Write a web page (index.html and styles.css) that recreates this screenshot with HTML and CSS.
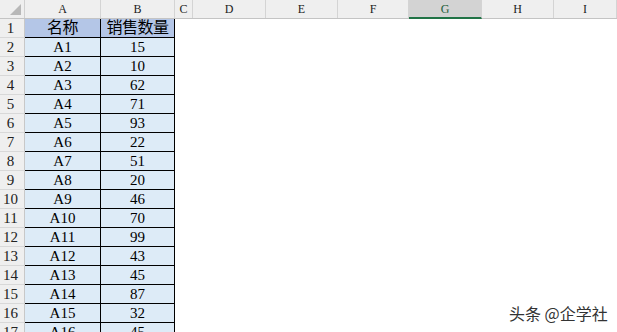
FILE: index.html
```html
<!DOCTYPE html>
<html lang="zh">

<head>
    <meta charset="UTF-8">
    <meta name="viewport" content="width=device-width, initial-scale=1.0">
    <title>销售数量</title>
    <link rel="stylesheet" href="styles.css">
</head>

<body>
    <div class="sheet">
        <div class="colhead">
            <div class="corner">
                <svg width="11" height="11" viewBox="0 0 11 11"><polygon points="11,0 11,11 0,11" fill="#b8b8b8"/></svg>
            </div>
            <div class="ch">A</div>
            <div class="ch">B</div>
            <div class="ch">C</div>
            <div class="ch">D</div>
            <div class="ch">E</div>
            <div class="ch">F</div>
            <div class="ch selected">G</div>
            <div class="ch">H</div>
            <div class="ch">I</div>
        </div>

        <div class="row">
            <div class="rn">1</div>
            <div class="cell title">名称</div>
            <div class="cell title">销售数量</div>
        </div>
        <div class="row"><div class="rn">2</div><div class="cell">A1</div><div class="cell">15</div></div>
        <div class="row"><div class="rn">3</div><div class="cell">A2</div><div class="cell">10</div></div>
        <div class="row"><div class="rn">4</div><div class="cell">A3</div><div class="cell">62</div></div>
        <div class="row"><div class="rn">5</div><div class="cell">A4</div><div class="cell">71</div></div>
        <div class="row"><div class="rn">6</div><div class="cell">A5</div><div class="cell">93</div></div>
        <div class="row"><div class="rn">7</div><div class="cell">A6</div><div class="cell">22</div></div>
        <div class="row"><div class="rn">8</div><div class="cell">A7</div><div class="cell">51</div></div>
        <div class="row"><div class="rn">9</div><div class="cell">A8</div><div class="cell">20</div></div>
        <div class="row"><div class="rn">10</div><div class="cell">A9</div><div class="cell">46</div></div>
        <div class="row"><div class="rn">11</div><div class="cell">A10</div><div class="cell">70</div></div>
        <div class="row"><div class="rn">12</div><div class="cell">A11</div><div class="cell">99</div></div>
        <div class="row"><div class="rn">13</div><div class="cell">A12</div><div class="cell">43</div></div>
        <div class="row"><div class="rn">14</div><div class="cell">A13</div><div class="cell">45</div></div>
        <div class="row"><div class="rn">15</div><div class="cell">A14</div><div class="cell">87</div></div>
        <div class="row"><div class="rn">16</div><div class="cell">A15</div><div class="cell">32</div></div>
        <div class="row"><div class="rn">17</div><div class="cell">A16</div><div class="cell">45</div></div>
    </div>

    <!-- 水印 -->
    <div class="watermark">头条 @企学社</div>
</body>

</html>
```

FILE: styles.css
```css
body {
    margin: 0;
    width: 617px;
    height: 332px;
    overflow: hidden;
    background: #fff;
    font-family: 'Liberation Serif', 'Noto Sans CJK SC', serif;
    color: #000;
    position: relative;
}

.sheet {
    display: flex;
    flex-direction: column;
}

/* 列标题 */
.colhead {
    display: grid;
    grid-template-columns: 25px 76px 74px 18px 73px 72px 71px 73px 72px 1fr;
    height: 19px;
    background: #efefef;
    border-bottom: 1px solid #c4c4c4;
    box-sizing: border-box;
}

.corner {
    display: flex;
    justify-content: flex-end;
    align-items: flex-end;
    padding: 0 3px 3px 0;
    border-right: 1px solid #d0d0d0;
}

.ch {
    display: flex;
    justify-content: center;
    align-items: center;
    font-size: 12px;
    color: #222;
    border-right: 1px solid #d4d4d4;
    padding-top: 1px;
}

.ch.selected {
    background: #d3d3d3;
    color: #1e5e3a;
    border-bottom: 2px solid #217346;
    margin-bottom: -1px;
}

.row {
    display: grid;
    grid-template-columns: 25px 76px 74px 1fr;
    height: 19px;
    line-height: 1;
}

.rn {
    display: flex;
    justify-content: center;
    align-items: center;
    padding-right: 3px;
    font-size: 15px;
    color: #222;
    background: #efefef;
    border-right: 1px solid #c8c8c8;
    border-bottom: 1px solid #d8d8d8;
}

.cell {
    display: flex;
    justify-content: center;
    align-items: center;
    font-size: 15px;
    background: #ddebf7;
    border-right: 1px solid #000;
    border-bottom: 1px solid #000;
}

.cell.title {
    background: #b4c6e7;
    font-size: 16px;
    letter-spacing: -0.5px;
}

.watermark {
    position: absolute;
    left: 509px;
    top: 302px;
    font-family: 'Noto Sans CJK SC', sans-serif;
    font-size: 16px;
    line-height: 22px;
    color: #333;
    text-shadow: 0 0 2px #fff, 0 0 2px #fff;
}
```
